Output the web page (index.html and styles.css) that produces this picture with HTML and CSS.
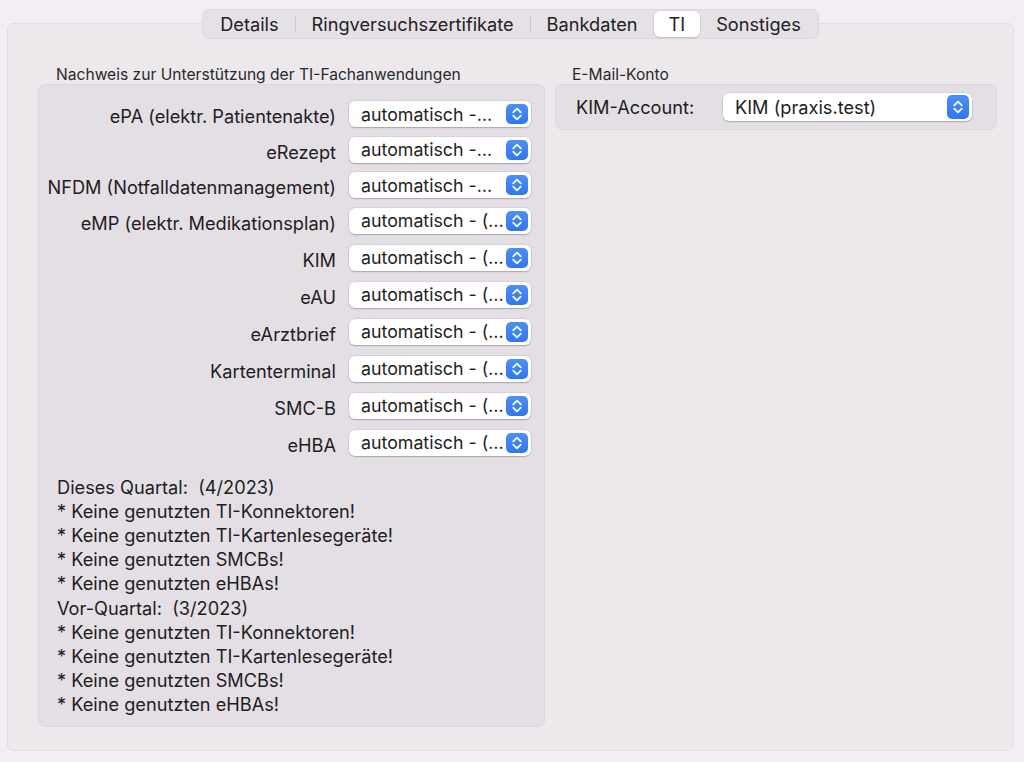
FILE: index.html
```html
<!DOCTYPE html>
<html lang="de">
<head>
<meta charset="utf-8">
<title>TI</title>
<link rel="stylesheet" href="styles.css">
</head>
<body>
<div class="window">
  <div class="tabs-row">
    <div class="tabs">
      <div class="tab">Details</div>
      <div class="sep"></div>
      <div class="tab">Ringversuchszertifikate</div>
      <div class="sep"></div>
      <div class="tab">Bankdaten</div>
      <div class="tab selected">TI</div>
      <div class="tab">Sonstiges</div>
    </div>
  </div>
  <div class="panel">
    <section class="col col-left">
      <div class="group-title">Nachweis zur Unterstützung der TI-Fachanwendungen</div>
      <div class="box box-left">
        <div class="row r1"><span class="label">ePA (elektr. Patientenakte)</span><div class="popup"><span class="ptext">automatisch -…</span><span class="stepper"><svg viewBox="0 0 22 20" width="22" height="20"><path d="M7.2 8.3 L11 4.6 L14.8 8.3 M7.2 11.7 L11 15.4 L14.8 11.7" fill="none" stroke="#fff" stroke-width="1.8" stroke-linecap="round" stroke-linejoin="round"/></svg></span></div></div>
        <div class="row r2"><span class="label">eRezept</span><div class="popup"><span class="ptext">automatisch -…</span><span class="stepper"><svg viewBox="0 0 22 20" width="22" height="20"><path d="M7.2 8.3 L11 4.6 L14.8 8.3 M7.2 11.7 L11 15.4 L14.8 11.7" fill="none" stroke="#fff" stroke-width="1.8" stroke-linecap="round" stroke-linejoin="round"/></svg></span></div></div>
        <div class="row r2"><span class="label">NFDM (Notfalldatenmanagement)</span><div class="popup"><span class="ptext">automatisch -…</span><span class="stepper"><svg viewBox="0 0 22 20" width="22" height="20"><path d="M7.2 8.3 L11 4.6 L14.8 8.3 M7.2 11.7 L11 15.4 L14.8 11.7" fill="none" stroke="#fff" stroke-width="1.8" stroke-linecap="round" stroke-linejoin="round"/></svg></span></div></div>
        <div class="row r2"><span class="label">eMP (elektr. Medikationsplan)</span><div class="popup"><span class="ptext">automatisch - (…</span><span class="stepper"><svg viewBox="0 0 22 20" width="22" height="20"><path d="M7.2 8.3 L11 4.6 L14.8 8.3 M7.2 11.7 L11 15.4 L14.8 11.7" fill="none" stroke="#fff" stroke-width="1.8" stroke-linecap="round" stroke-linejoin="round"/></svg></span></div></div>
        <div class="row r3"><span class="label">KIM</span><div class="popup"><span class="ptext">automatisch - (…</span><span class="stepper"><svg viewBox="0 0 22 20" width="22" height="20"><path d="M7.2 8.3 L11 4.6 L14.8 8.3 M7.2 11.7 L11 15.4 L14.8 11.7" fill="none" stroke="#fff" stroke-width="1.8" stroke-linecap="round" stroke-linejoin="round"/></svg></span></div></div>
        <div class="row r3"><span class="label">eAU</span><div class="popup"><span class="ptext">automatisch - (…</span><span class="stepper"><svg viewBox="0 0 22 20" width="22" height="20"><path d="M7.2 8.3 L11 4.6 L14.8 8.3 M7.2 11.7 L11 15.4 L14.8 11.7" fill="none" stroke="#fff" stroke-width="1.8" stroke-linecap="round" stroke-linejoin="round"/></svg></span></div></div>
        <div class="row r3"><span class="label">eArztbrief</span><div class="popup"><span class="ptext">automatisch - (…</span><span class="stepper"><svg viewBox="0 0 22 20" width="22" height="20"><path d="M7.2 8.3 L11 4.6 L14.8 8.3 M7.2 11.7 L11 15.4 L14.8 11.7" fill="none" stroke="#fff" stroke-width="1.8" stroke-linecap="round" stroke-linejoin="round"/></svg></span></div></div>
        <div class="row r3"><span class="label">Kartenterminal</span><div class="popup"><span class="ptext">automatisch - (…</span><span class="stepper"><svg viewBox="0 0 22 20" width="22" height="20"><path d="M7.2 8.3 L11 4.6 L14.8 8.3 M7.2 11.7 L11 15.4 L14.8 11.7" fill="none" stroke="#fff" stroke-width="1.8" stroke-linecap="round" stroke-linejoin="round"/></svg></span></div></div>
        <div class="row r3"><span class="label">SMC-B</span><div class="popup"><span class="ptext">automatisch - (…</span><span class="stepper"><svg viewBox="0 0 22 20" width="22" height="20"><path d="M7.2 8.3 L11 4.6 L14.8 8.3 M7.2 11.7 L11 15.4 L14.8 11.7" fill="none" stroke="#fff" stroke-width="1.8" stroke-linecap="round" stroke-linejoin="round"/></svg></span></div></div>
        <div class="row r3"><span class="label">eHBA</span><div class="popup"><span class="ptext">automatisch - (…</span><span class="stepper"><svg viewBox="0 0 22 20" width="22" height="20"><path d="M7.2 8.3 L11 4.6 L14.8 8.3 M7.2 11.7 L11 15.4 L14.8 11.7" fill="none" stroke="#fff" stroke-width="1.8" stroke-linecap="round" stroke-linejoin="round"/></svg></span></div></div>
        <div class="info">
          <div>Dieses Quartal:&nbsp; (4/2023)</div>
          <div>* Keine genutzten TI-Konnektoren!</div>
          <div>* Keine genutzten TI-Kartenlesegeräte!</div>
          <div>* Keine genutzten SMCBs!</div>
          <div>* Keine genutzten eHBAs!</div>
          <div>Vor-Quartal:&nbsp; (3/2023)</div>
          <div>* Keine genutzten TI-Konnektoren!</div>
          <div>* Keine genutzten TI-Kartenlesegeräte!</div>
          <div>* Keine genutzten SMCBs!</div>
          <div>* Keine genutzten eHBAs!</div>
        </div>
      </div>
    </section>
    <section class="col col-right">
      <div class="group-title">E-Mail-Konto</div>
      <div class="box box-right">
        <span class="kim-label">KIM-Account:</span>
        <div class="popup popup-kim"><span class="ptext">KIM (praxis.test)</span><span class="stepper stepper-kim"><svg viewBox="0 0 22 24" width="22" height="24"><path d="M7.2 10.3 L11 6.6 L14.8 10.3 M7.2 13.7 L11 17.4 L14.8 13.7" fill="none" stroke="#fff" stroke-width="1.8" stroke-linecap="round" stroke-linejoin="round"/></svg></span></div>
      </div>
    </section>
  </div>
</div>
</body>
</html>
```

FILE: styles.css
```css
* { box-sizing: border-box; }
html, body { margin: 0; padding: 0; }
body {
  background: #f2eef3;
  font-family: Inter, "Noto Sans", "DejaVu Sans", sans-serif;
  color: #1f1d1f;
  width: 1024px;
  height: 762px;
  overflow: hidden;
}
.window { padding-top: 9px; }
.tabs-row {
  margin-left: 7px;
  width: 1007px;
  display: flex;
  justify-content: center;
  position: relative;
  z-index: 1;
  margin-bottom: -16px;
}
.tabs {
  display: flex;
  align-items: center;
  height: 30px;
  padding: 0 1px;
  background: #e5e1e6;
  border: 1px solid #dcd8dd;
  border-radius: 7px;
}
.tab {
  font-size: 18.2px;
  line-height: 26px;
  height: 26px;
  padding: 0 16px;
  color: #232123;
  border-radius: 6px;
}
.tab.selected {
  background: #ffffff;
  box-shadow: 0 0 0 0.5px rgba(0,0,0,0.08), 0 1px 2px rgba(0,0,0,0.12);
  padding: 0 15px;
}
.sep { width: 1px; height: 16px; background: #cdc9ce; }
.panel {
  margin-left: 7px;
  width: 1007px;
  height: 728px;
  background: #ece8ec;
  border: 1px solid #e2dee2;
  border-radius: 6px;
  display: flex;
  align-items: flex-start;
  padding-top: 42px;
  padding-left: 30px;
}
.col { display: flex; flex-direction: column; }
.col-left { width: 507px; }
.col-right { width: 442px; margin-left: 10px; }
.group-title {
  font-size: 15.6px;
  line-height: 16px;
  height: 16px;
  color: #2a282a;
  margin-top: 1px;
  margin-bottom: 1px;
}
.col-left .group-title { padding-left: 18px; }
.col-right .group-title { padding-left: 17px; }
.box {
  background: #e3dfe4;
  border: 1px solid #dcd8dc;
  border-radius: 7px;
}
.box-left {
  height: 643px;
  padding: 16px 13px 0 0;
}
.row {
  display: flex;
  align-items: center;
  height: 26px;
}
.r2 { margin-top: 9.5px; }
.r3 { margin-top: 11px; }
.label {
  width: 297px;
  text-align: right;
  font-size: 18.2px;
  white-space: nowrap;
  position: relative;
  top: 2px;
}
.popup {
  margin-left: 13px;
  width: 182px;
  height: 26px;
  background: #ffffff;
  border-radius: 6px;
  box-shadow: 0 0 0 0.5px rgba(0,0,0,0.10), 0 1px 1.5px rgba(0,0,0,0.22);
  display: flex;
  align-items: center;
  justify-content: space-between;
  padding: 0 3px 0 12px;
}
.ptext { font-size: 17.8px; white-space: nowrap; color: #1f1d1f; overflow: hidden; }
.stepper {
  flex: none;
  width: 22px;
  height: 20px;
  border-radius: 5px;
  background: linear-gradient(#4c8ff8, #2f77f3);
  display: flex;
}
.info {
  margin-top: 19px;
  padding-left: 18px;
  font-size: 18.2px;
  line-height: 24.2px;
}
.box-right {
  height: 46px;
  display: flex;
  align-items: center;
  padding-left: 20px;
}
.kim-label { font-size: 18.2px; width: 147px; }
.popup-kim {
  margin-left: 0;
  width: 249px;
  height: 28px;
  padding: 0 3px 0 12px;
}
.popup-kim .ptext { font-size: 18.2px; }
.stepper-kim { height: 24px; }
```
